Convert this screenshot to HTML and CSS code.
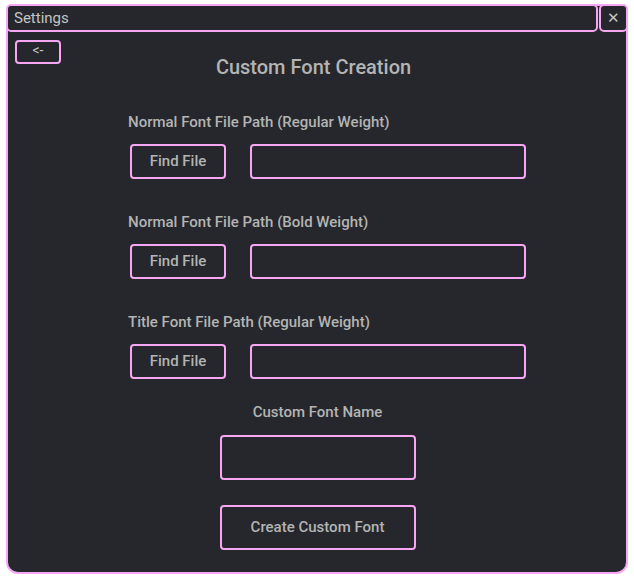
FILE: index.html
```
<!DOCTYPE html>
<html>
<head>
<meta charset="utf-8">
<link rel="stylesheet" href="styles.css">
</head>
<body>
<div class="window">
  <div class="header">
    <div class="title">Settings</div>
    <div class="close">&#x2715;</div>
  </div>
  <div class="content">
    <div class="back">&lt;-</div>
    <h1 class="heading">Custom Font Creation</h1>
    <div class="section">
      <div class="label">Normal Font File Path (Regular Weight)</div>
      <div class="row">
        <div class="btn find">Find File</div>
        <div class="field path"></div>
      </div>
    </div>
    <div class="section">
      <div class="label">Normal Font File Path (Bold Weight)</div>
      <div class="row">
        <div class="btn find">Find File</div>
        <div class="field path"></div>
      </div>
    </div>
    <div class="section">
      <div class="label">Title Font File Path (Regular Weight)</div>
      <div class="row">
        <div class="btn find">Find File</div>
        <div class="field path"></div>
      </div>
    </div>
    <div class="name-section">
      <div class="label center">Custom Font Name</div>
      <div class="field name"></div>
      <div class="btn create">Create Custom Font</div>
    </div>
  </div>
</div>
</body>
</html>
```
FILE: styles.css
```
html, body {
  margin: 0;
  padding: 0;
  background: #ffffff;
}
body {
  font-family: Roboto, "Liberation Sans", sans-serif;
  color: #b4b4b4;
}
.window {
  box-sizing: border-box;
  margin: 4px 0 0 6px;
  width: 622px;
  height: 570px;
  border: 2px solid #f7a6f3;
  border-radius: 6px 6px 12px 12px;
  background: #25272c;
}
.header {
  display: flex;
  gap: 1px;
  margin: -2px -2px 0 -2px;
  height: 28px;
}
.title {
  flex: 1;
  box-sizing: border-box;
  border: 2px solid #f7a6f3;
  border-radius: 5px;
  background: #25272c;
  padding-left: 6px;
  font-size: 15px;
  line-height: 24px;
  color: #c4c4c4;
}
.close {
  box-sizing: border-box;
  width: 29px;
  border: 2px solid #f7a6f3;
  border-radius: 5px;
  background: #25272c;
  text-align: center;
  font-size: 15px;
  line-height: 24px;
  color: #c4c4c4;
}
.content {
  display: flex;
  flex-direction: column;
}
.back {
  box-sizing: border-box;
  margin: 8px 0 0 7px;
  width: 46px;
  height: 24px;
  border: 2px solid #f7a6f3;
  border-radius: 4px;
  text-align: center;
  font-size: 14px;
  line-height: 17px;
  color: #c4c4c4;
}
.heading {
  margin: -10px 0 0 0;
  padding-right: 7px;
  text-align: center;
  font-size: 20px;
  font-weight: 500;
  line-height: 26px;
  color: #b4b4b4;
}
.section {
  margin: 33px 0 0 120px;
  width: 398px;
}
.section + .section {
  margin-top: 33px;
}
.label {
  font-size: 15px;
  font-weight: 500;
  line-height: 18px;
}
.row {
  display: flex;
  gap: 24px;
  margin: 13px 0 1px 2px;
}
.btn, .field {
  box-sizing: border-box;
  border: 2px solid #f7a6f3;
  border-radius: 4px;
}
.btn {
  text-align: center;
  font-size: 15px;
  font-weight: 500;
  color: #b4b4b4;
}
.find {
  width: 96px;
  height: 35px;
  line-height: 31px;
}
.path {
  width: 276px;
  height: 35px;
}
.name-section {
  display: flex;
  flex-direction: column;
  align-items: center;
  margin: 23px 0 0 0;
  padding-left: 1px;
}
.center {
  text-align: center;
}
.name {
  margin-top: 14px;
  width: 196px;
  height: 45px;
}
.create {
  margin-top: 25px;
  width: 196px;
  height: 45px;
  line-height: 41px;
}
```
